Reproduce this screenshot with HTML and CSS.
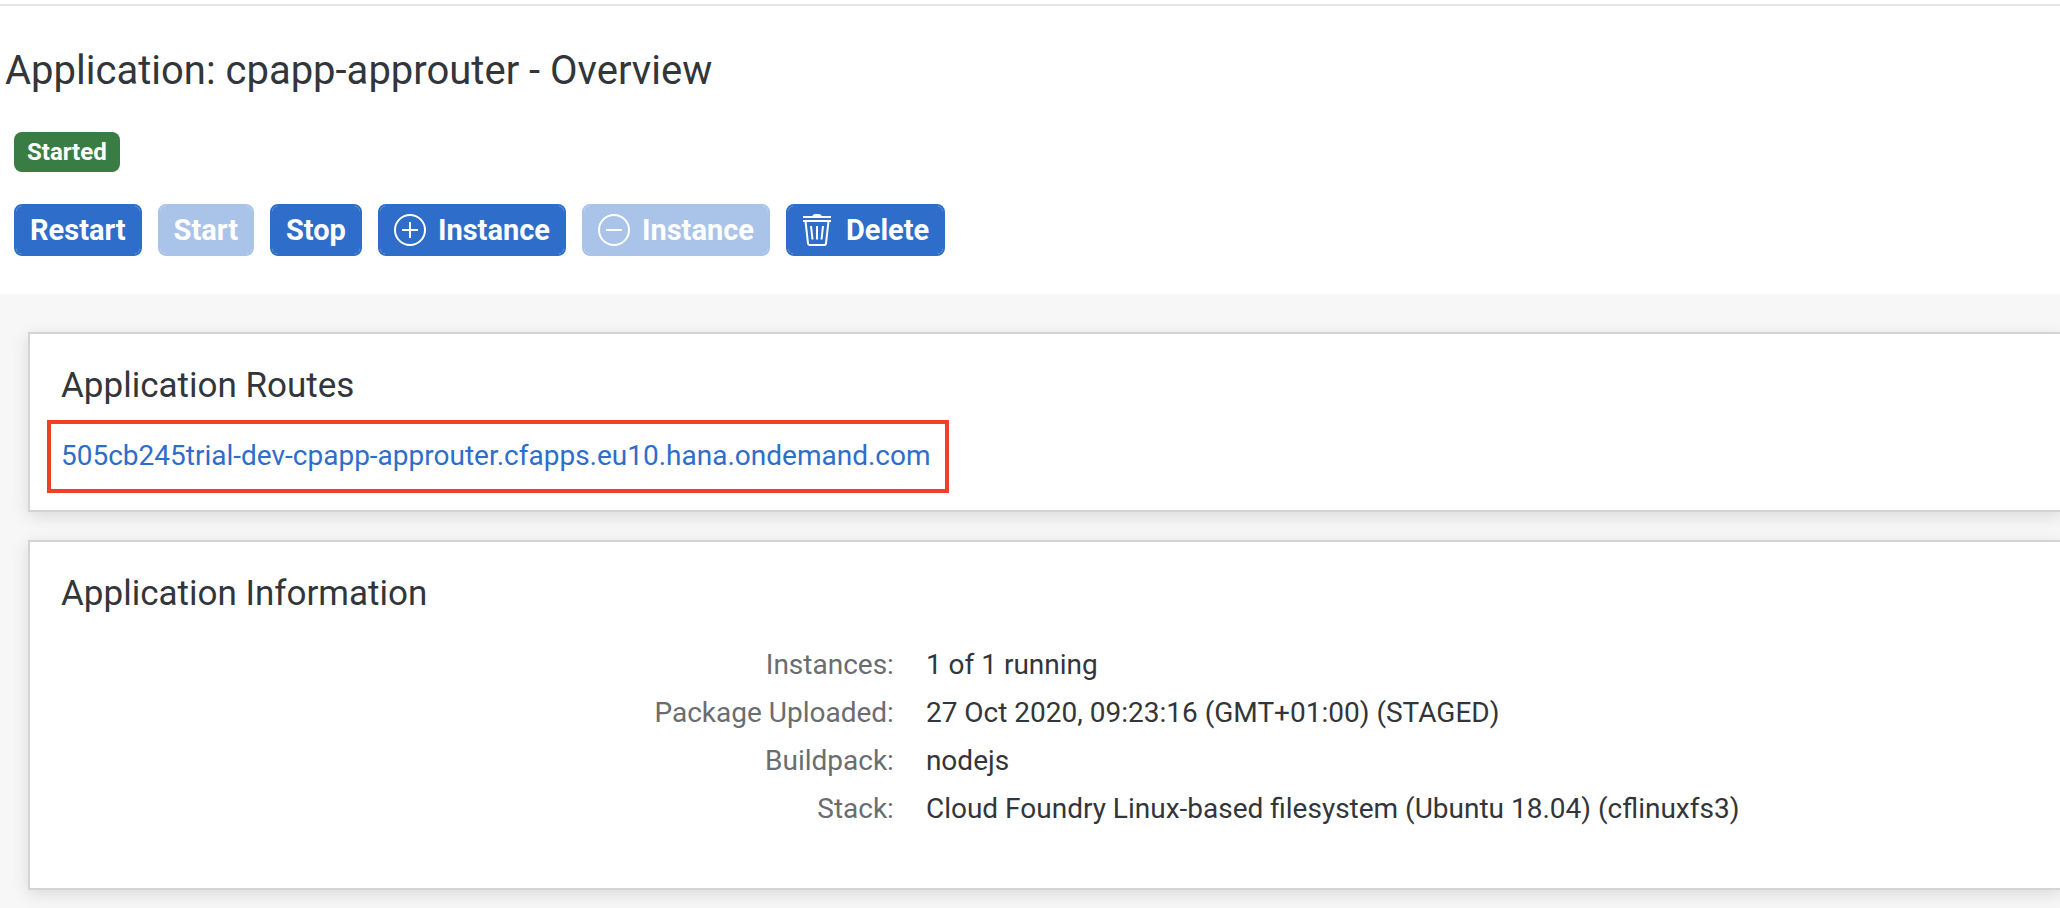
FILE: index.html
```html
<!DOCTYPE html>
<html lang="en">
<head>
<meta charset="utf-8">
<title>Application: cpapp-approuter - Overview</title>
<link rel="stylesheet" href="styles.css">
</head>
<body>
<header class="page-header">
  <h1 class="page-title">Application: cpapp-approuter - Overview</h1>
  <span class="badge">Started</span>
  <div class="actions">
    <button class="btn" type="button">Restart</button>
    <button class="btn" type="button" disabled>Start</button>
    <button class="btn" type="button">Stop</button>
    <button class="btn" type="button">
      <svg class="icon" viewBox="0 0 32 32" aria-hidden="true"><circle cx="16" cy="16" r="15"/><path d="M8 16h16M16 8v16"/></svg>
      Instance
    </button>
    <button class="btn" type="button" disabled>
      <svg class="icon" viewBox="0 0 32 32" aria-hidden="true"><circle cx="16" cy="16" r="15"/><path d="M8 16h16"/></svg>
      Instance
    </button>
    <button class="btn" type="button">
      <svg class="icon" viewBox="0 0 32 32" aria-hidden="true"><path d="M1 3h28M1 7h28M3.500 7L6 29.500Q6.200 31 7.500 31H22.500Q23.800 31 24 29.500L26.500 7M9 12l1.500 13.500M15 12v13.500M21 12l-1.500 13.500"/><path class="solid" d="M10 2.500Q10.500 0 13 0H17Q19.500 0 20 2.500Z"/></svg>
      Delete
    </button>
  </div>
</header>
<main class="content">
  <section class="card">
    <h2 class="card-title">Application Routes</h2>
    <div class="route"><a class="link" href="#">505cb245trial-dev-cpapp-approuter.cfapps.eu10.hana.ondemand.com</a></div>
  </section>
  <section class="card card-info">
    <h2 class="card-title">Application Information</h2>
    <dl class="info">
      <dt>Instances:</dt><dd>1 of 1 running</dd>
      <dt>Package Uploaded:</dt><dd>27 Oct 2020, 09:23:16 (GMT+01:00) (STAGED)</dd>
      <dt>Buildpack:</dt><dd>nodejs</dd>
      <dt>Stack:</dt><dd>Cloud Foundry Linux-based filesystem (Ubuntu 18.04) (cflinuxfs3)</dd>
    </dl>
  </section>
</main>
</body>
</html>
```

FILE: styles.css
```css
* { box-sizing: border-box; }
body {
  margin: 0;
  background: #f7f7f7;
  color: #32363a;
  font-family: Roboto, "Noto Sans", sans-serif;
  font-size: 28px;
  line-height: 48px;
  overflow-x: hidden;
}
body::before { content: ""; display: block; height: 4px; margin-bottom: -4px; background: #fff; }
.page-header {
  margin-top: 4px;
  padding: 37px 14px 38px;
  border-top: 2px solid #e5e5e5;
  background: #fff;
  display: flex;
  flex-direction: column;
  align-items: flex-start;
}
.page-title {
  margin: 0 0 33px -9px;
  font-size: 40px;
  font-weight: 400;
  line-height: 56px;
}
.badge {
  margin-bottom: 32px;
  padding: 0 13px;
  border-radius: 8px;
  background: #397d45;
  color: #fff;
  font-size: 24px;
  font-weight: 700;
  line-height: 40px;
}
.actions { display: flex; gap: 16px; }
.btn {
  display: flex;
  align-items: center;
  gap: 12px;
  height: 52px;
  padding: 0 14px;
  border: 2px solid #2e6dca;
  border-radius: 8px;
  background: #2e6dca padding-box;
  color: #fff;
  font: inherit;
  font-size: 29px;
  font-weight: 700;
}
.btn:disabled { opacity: 0.4; }
.icon {
  width: 32px;
  height: 32px;
  fill: none;
  stroke: #fff;
  stroke-width: 2;
}
.icon .solid { fill: #fff; stroke: none; }
.content {
  display: flex;
  flex-direction: column;
  gap: 28px;
  padding: 38px 0 18px 28px;
}
.card {
  margin-right: -2px;
  padding: 29px 0 17px 31px;
  border: 2px solid #d4d4d4;
  background: #fff;
  box-shadow: 0 4px 16px rgba(0, 0, 0, 0.12);
}
.card-title {
  margin: 0 0 11px;
  font-size: 35px;
  font-weight: 400;
  line-height: 46px;
}
.route {
  width: fit-content;
  margin-left: -14px;
  padding: 8px 14px 9px 10px;
  border: 4px solid #ee4026;
}
.link { color: #2e6dca; text-decoration: none; }
.info {
  display: grid;
  grid-template-columns: 5fr 7fr;
  margin: 24px 0 0;
}
.info dt { color: #6a6d70; text-align: right; }
.info dd { margin: 0; padding-left: 32px; }
.card-info { padding-bottom: 55px; }
```
